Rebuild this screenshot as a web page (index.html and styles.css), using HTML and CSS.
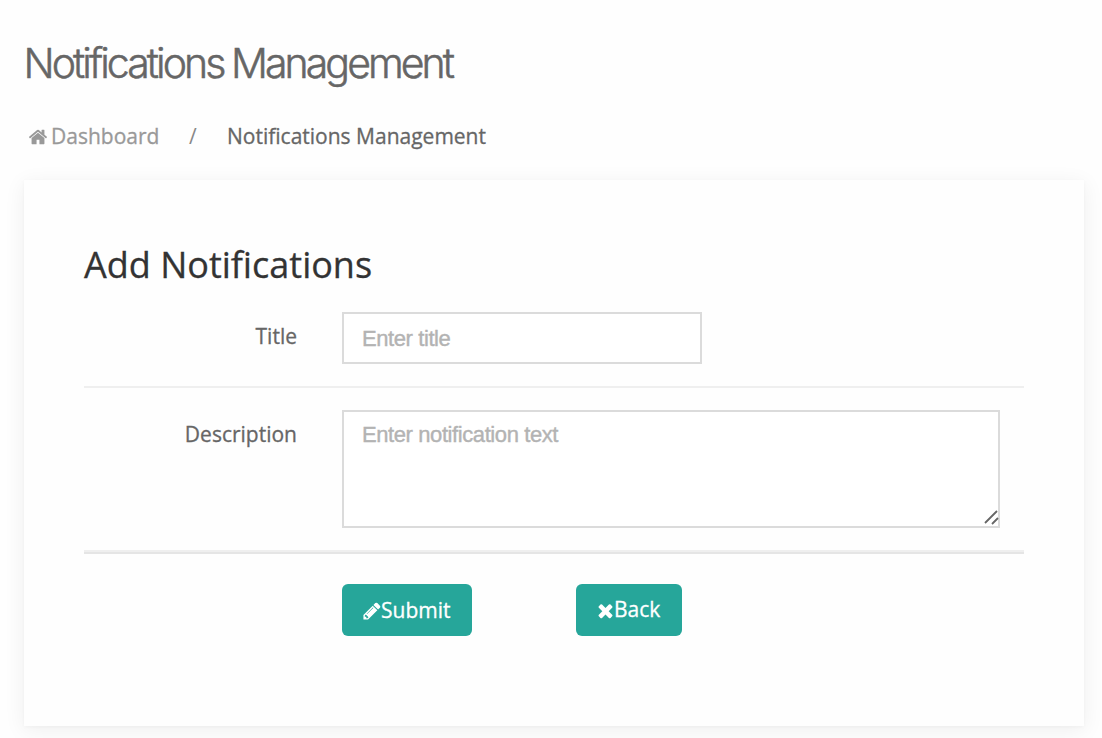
FILE: index.html
```html
<!DOCTYPE html>
<html lang="en">
<head>
<meta charset="utf-8">
<title>Notifications Management</title>
<link rel="stylesheet" href="styles.css">
</head>
<body>
<main class="page">
  <h1 class="page-title">Notifications Management</h1>
  <nav class="breadcrumb">
    <a class="crumb-link"><svg class="icon" viewBox="0 0 1792 1792"><path d="M1472 992v480q0 26-19 45t-45 19h-384v-384h-256v384h-384q-26 0-45-19t-19-45v-480q0-1 .5-3t.5-3l575-474 575 474q1 2 1 6zm223-69l-62 74q-8 9-21 11h-3q-13 0-21-7l-692-577-692 577q-12 8-24 7-13-2-21-11l-62-74q-8-10-7-23.5t11-21.5l719-599q32-26 76-26t76 26l244 204v-195q0-14 9-23t23-9h192q14 0 23 9t9 23v408l219 182q10 8 11 21.5t-7 23.5z"/></svg><span>Dashboard</span></a>
    <span class="separator">/</span>
    <span class="crumb-current">Notifications Management</span>
  </nav>
  <section class="card">
    <h2 class="card-title">Add Notifications</h2>
    <form>
      <div class="form-row title-row">
        <label class="label" for="title">Title</label>
        <input class="field title-field" id="title" type="text" placeholder="Enter title">
      </div>
      <div class="form-row description-row">
        <label class="label" for="description">Description</label>
        <div class="textarea-wrap">
          <textarea class="field text-field" id="description" placeholder="Enter notification text"></textarea>
          <svg class="grip" viewBox="0 0 16 16"><path d="M2 14 14 2M9 15l6-6"/></svg>
        </div>
      </div>
      <div class="actions">
        <button class="button submit" type="button"><svg class="icon" viewBox="0 0 1792 1792"><path d="M491 1536l91-91-235-235-91 91v107h128v128h107zm523-928q0-22-22-22-10 0-17 7l-542 542q-7 7-7 17 0 22 22 22 10 0 17-7l542-542q7-7 7-17zm-54-192l416 416-832 832h-416v-416zm683 96q0 53-37 90l-166 166-416-416 166-165q36-38 90-38 53 0 91 38l235 234q37 39 37 91z"/></svg><span>Submit</span></button>
        <button class="button back" type="button"><svg class="icon" viewBox="0 0 1792 1792"><path d="M1490 1322q0 40-28 68l-136 136q-28 28-68 28t-68-28l-294-294-294 294q-28 28-68 28t-68-28l-136-136q-28-28-28-68t28-68l294-294-294-294q-28-28-28-68t28-68l136-136q28-28 68-28t68 28l294 294 294-294q28-28 68-28t68 28l136 136q28 28 28 68t-28 68l-294 294 294 294q28 28 28 68z"/></svg><span>Back</span></button>
      </div>
    </form>
  </section>
</main>
</body>
</html>
```

FILE: styles.css
```css
* { box-sizing: border-box; }

body {
  margin: 0;
  overflow: hidden;
  background: #fefefe;
  color: #666;
  font: 21px/30px "Open Sans", sans-serif;
  -webkit-text-stroke: .3px;
}

.page { height: 738px; padding: 37px 18px 0 24px; }

.page-title {
  margin: 0 0 0 -.5px;
  font: 300 41px/52px Inter, sans-serif;
  letter-spacing: -2.94px;
  word-spacing: -1px;
  white-space: nowrap;
  -webkit-text-stroke: .5px;
}

.breadcrumb {
  display: flex;
  height: 30px;
  margin: 32px 0 29px;
  padding-left: 3px;
  white-space: nowrap;
}

.icon { width: 20px; height: 20px; flex: none; fill: currentColor; }

.crumb-link { display: flex; width: 162px; color: #999; }
.crumb-link .icon { margin: 6px 3.5px 0 .5px; }
.separator { width: 38px; color: #888; -webkit-text-stroke: 0; }

.card {
  width: 1060px;
  height: 546px;
  padding: 60px;
  background: #fefefe;
  box-shadow: 0 4px 20px 1px rgba(0, 0, 0, .06), 0 1px 4px rgba(0, 0, 0, .03);
}

.card-title {
  margin: 0;
  color: #333;
  font: 400 36px/50px "Open Sans", sans-serif;
}

.form-row { display: flex; }
.title-row { height: 98px; padding-top: 22px; border-bottom: 2px solid #efefef; }
.description-row {
  height: 166px;
  padding-top: 22px;
  border-bottom: 2px solid #e5e5e5;
  box-shadow: inset 0 -2px #efefef;
}

.label { width: 213px; margin-right: 45px; padding-top: 9px; text-align: right; }

.field {
  display: block;
  border: 2px solid #dbdbdb;
  border-radius: 0;
  outline: 0;
  background: #fff;
  font: 22px/28px "Liberation Sans", sans-serif;
  letter-spacing: -.41px;
  resize: none;
}
.field::placeholder { color: #b3b3b3; opacity: 1; -webkit-text-stroke: .4px; }
.title-field { width: 360px; height: 52px; padding: 2px 18px 0; }
.textarea-wrap { position: relative; width: 658px; height: 118px; }
.text-field { width: 658px; height: 118px; padding: 9px 18px; }
.grip {
  position: absolute;
  right: 1px;
  bottom: 3px;
  width: 16px;
  height: 16px;
  fill: none;
  stroke: #666;
  stroke-width: 1.8;
}

.actions { display: flex; gap: 104px; padding: 30px 0 0 258px; }
.button {
  display: flex;
  height: 52px;
  border: 0;
  border-radius: 6px;
  background: #26a69a;
  color: #fff;
  font: 21px/30px "Open Sans", sans-serif;
  -webkit-text-stroke: .3px;
}
.submit { width: 130px; padding: 11px 0 0 19px; }
.submit .icon { margin: 6px -.5px 0 .5px; }
.back { width: 106px; padding: 10px 0 0 20px; }
.back .icon { width: 21px; height: 21px; margin: 6px -2px 0 -1px; }
```
